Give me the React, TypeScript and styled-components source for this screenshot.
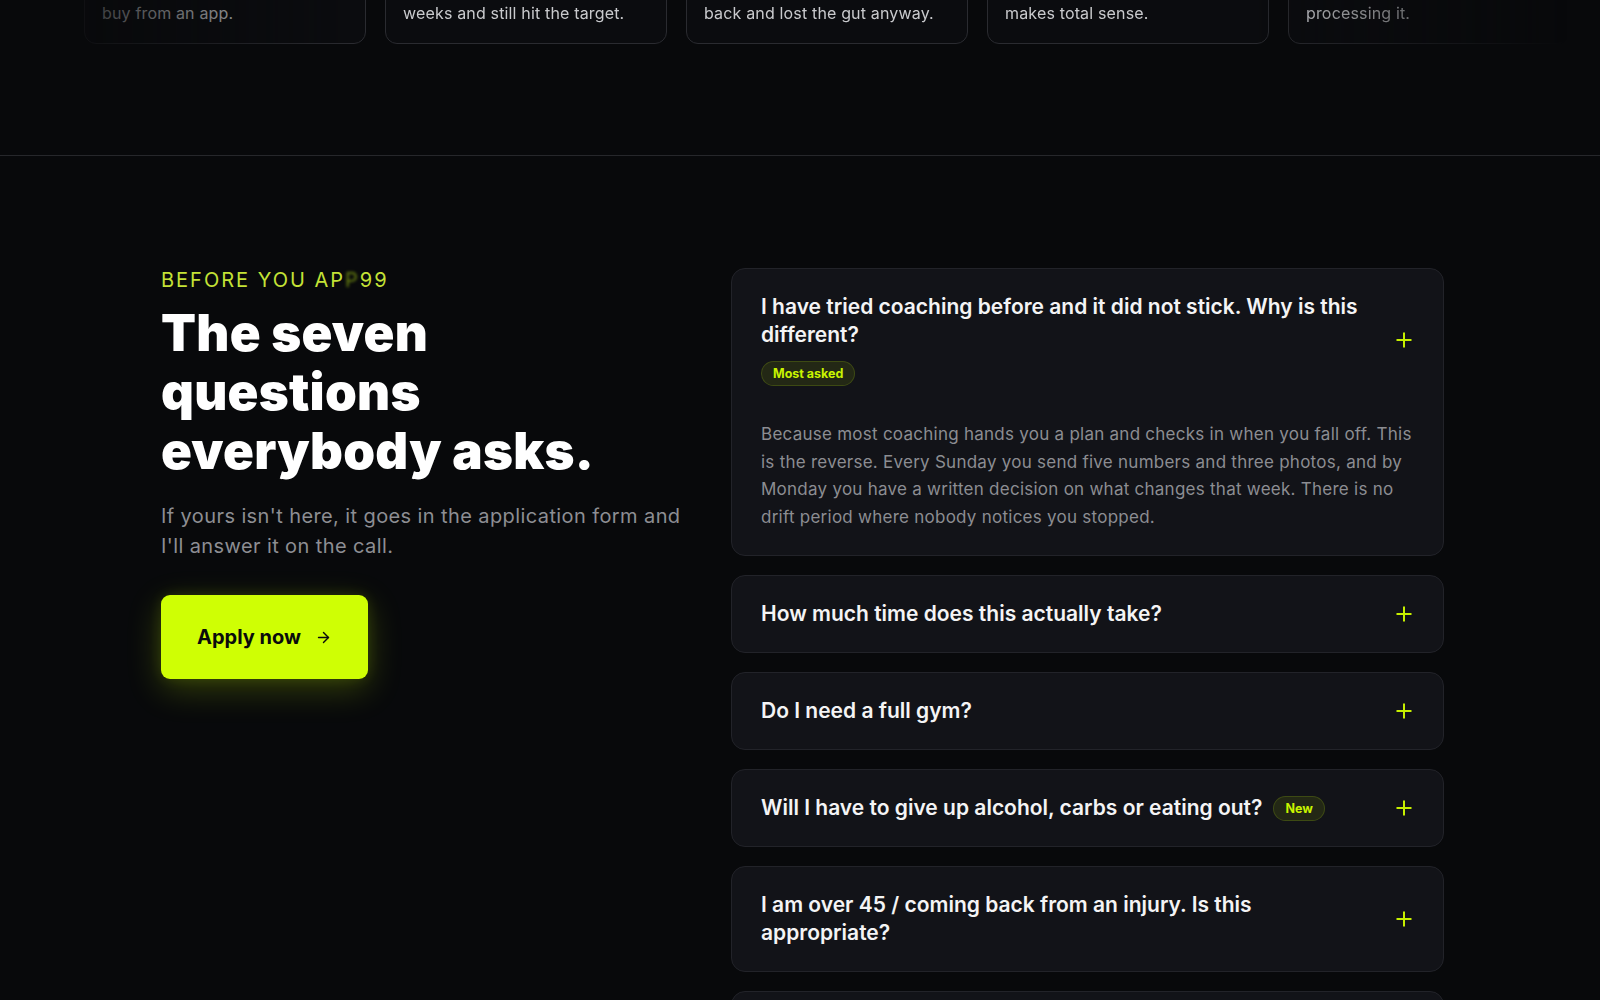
import React from 'react';
import styled, { createGlobalStyle } from 'styled-components';
import { ArrowRight } from 'lucide-react';

const lime = '#cfff04';

const GlobalStyle = createGlobalStyle`
  * { box-sizing: border-box; }
  html, body {
    margin: 0;
    background: #08090b;
    color: #f2f2f3;
    font-family: Inter, "Noto Sans", sans-serif;
    -webkit-font-smoothing: antialiased;
  }
`;

const Page = styled.div`
  min-height: 100vh;
  background: #08090b;
  overflow: hidden;
`;

const ProofBand = styled.section`
  padding-bottom: 111px;
  border-bottom: 1px solid #26272b;
`;

const ProofTrack = styled.div`
  height: 44px;
  display: flex;
  align-items: flex-end;
  gap: 19px;
  padding-left: 84px;
  overflow: hidden;
  mask-image: linear-gradient(90deg, transparent 0%, #000 22%, #000 78%, transparent 98%);
  -webkit-mask-image: linear-gradient(90deg, transparent 0%, #000 22%, #000 78%, transparent 98%);
`;

const ProofCard = styled.div`
  flex: 0 0 282px;
  width: 282px;
  min-width: 0;
  padding: 20px 17px 18px;
  border: 1px solid #2a2b30;
  border-radius: 12px;
  background: #0b0c0f;
  overflow: hidden;
`;

const ProofText = styled.div`
  font-size: 16px;
  line-height: 24px;
  letter-spacing: 0.01em;
  color: #c9cacd;
`;

const FaqSection = styled.section`
  padding: 112px 156px 0 161px;
`;

const Grid = styled.div`
  display: grid;
  grid-template-columns: 535px 713px;
  justify-content: space-between;
  align-items: start;
`;

const Intro = styled.div`
  display: flex;
  flex-direction: column;
  align-items: flex-start;
`;

const Eyebrow = styled.div`
  font-size: 20px;
  line-height: 24px;
  letter-spacing: 0.1em;
  color: #c4e236;
  text-transform: uppercase;
`;

const Glitch = styled.span`
  color: #7f9e12;
  filter: blur(1.6px);
  opacity: 0.8;
`;

const Heading = styled.h2`
  margin: 11px 0 0;
  max-width: 480px;
  font-size: 51px;
  line-height: 59px;
  font-weight: 900;
  letter-spacing: 0.005em;
  color: #ffffff;
`;

const Lead = styled.p`
  margin: 21px 0 0;
  max-width: 535px;
  font-size: 20px;
  line-height: 30px;
  letter-spacing: 0.02em;
  color: #8d8e93;
`;

const ApplyButton = styled.a`
  margin-top: 34px;
  height: 84px;
  padding: 0 36px;
  display: inline-flex;
  align-items: center;
  gap: 14px;
  border-radius: 9px;
  background: ${lime};
  color: #0a0b0c;
  font-size: 20px;
  font-weight: 700;
  text-decoration: none;
  box-shadow: 0 10px 34px rgba(207, 255, 4, 0.22), 0 0 14px rgba(207, 255, 4, 0.12);
`;

const FaqList = styled.div`
  display: flex;
  flex-direction: column;
  gap: 19px;
`;

const Card = styled.div`
  padding: 24px 27px 24px 29px;
  border: 1px solid #222329;
  border-radius: 14px;
  background: #121318;
`;

const Header = styled.div`
  display: flex;
  align-items: center;
  gap: 24px;
`;

const TitleBlock = styled.div`
  flex: 1;
  min-width: 0;
`;

const TitleRow = styled.div`
  display: flex;
  align-items: center;
  gap: 11px;
`;

const Question = styled.h3`
  margin: 0;
  font-size: 21px;
  line-height: 28px;
  font-weight: 600;
  color: #f4f4f5;
`;

const Tag = styled.span<{ $below?: boolean }>`
  display: inline-flex;
  align-items: center;
  height: 25px;
  padding: 0 11px;
  margin-top: ${({ $below }) => ($below ? '12px' : '0')};
  border-radius: 999px;
  border: 1px solid rgba(207, 255, 4, 0.16);
  background: rgba(207, 255, 4, 0.09);
  color: #c9f400;
  font-size: 12.5px;
  font-weight: 700;
  white-space: nowrap;
  flex-shrink: 0;
`;

const Toggle = styled.svg`
  flex: 0 0 24px;
  width: 24px;
  height: 24px;
  color: #c6ef00;
`;

const Answer = styled.p`
  margin: 35px 0 0;
  font-size: 17px;
  line-height: 27.5px;
  letter-spacing: 0.015em;
  color: #8c8d92;
`;

const proofs: { lead: string; last: string }[] = [
  { lead: 'Honest feedback every week, not another plan I could', last: 'buy from an app.' },
  { lead: 'Travelled for work for three of the twelve', last: 'weeks and still hit the target.' },
  { lead: 'Kept the weekend drinks, got my energy', last: 'back and lost the gut anyway.' },
  { lead: 'Every change comes with a reason, so it', last: 'makes total sense.' },
  { lead: 'The Monday notes are the best part, I am still', last: 'processing it.' },
];

type Faq = {
  q: string;
  tag?: string;
  tagBelow?: boolean;
  a?: string;
};

const faqs: Faq[] = [
  {
    q: 'I have tried coaching before and it did not stick. Why is this different?',
    tag: 'Most asked',
    tagBelow: true,
    a: 'Because most coaching hands you a plan and checks in when you fall off. This is the reverse. Every Sunday you send five numbers and three photos, and by Monday you have a written decision on what changes that week. There is no drift period where nobody notices you stopped.',
  },
  { q: 'How much time does this actually take?' },
  { q: 'Do I need a full gym?' },
  { q: 'Will I have to give up alcohol, carbs or eating out?', tag: 'New' },
  { q: 'I am over 45 / coming back from an injury. Is this appropriate?' },
  { q: 'What happens when the twelve weeks are over?' },
  { q: 'How do I know if I am a good fit?' },
];

const PlusIcon = () => (
  <Toggle viewBox="0 0 24 24" fill="none">
    <path d="M12 4.5v15M4.5 12h15" stroke="currentColor" strokeWidth="2" />
  </Toggle>
);

const FaqCard = ({ item }: { item: Faq }) => (
  <Card>
    <Header>
      <TitleBlock>
        {item.tag && !item.tagBelow ? (
          <TitleRow>
            <Question>{item.q}</Question>
            <Tag>{item.tag}</Tag>
          </TitleRow>
        ) : (
          <Question>{item.q}</Question>
        )}
        {item.tag && item.tagBelow && <Tag $below>{item.tag}</Tag>}
      </TitleBlock>
      <PlusIcon />
    </Header>
    {item.a && <Answer>{item.a}</Answer>}
  </Card>
);

export default function App() {
  return (
    <Page>
      <GlobalStyle />
      <ProofBand>
        <ProofTrack>
          {proofs.map((p) => (
            <ProofCard key={p.last}>
              <ProofText>{p.lead}</ProofText>
              <ProofText>{p.last}</ProofText>
            </ProofCard>
          ))}
        </ProofTrack>
      </ProofBand>

      <FaqSection>
        <Grid>
          <Intro>
            <Eyebrow>
              Before you ap<Glitch>p</Glitch>99
            </Eyebrow>
            <Heading>The seven questions everybody asks.</Heading>
            <Lead>If yours isn't here, it goes in the application form and I'll answer it on the call.</Lead>
            <ApplyButton href="#apply">
              Apply now
              <ArrowRight size={17} strokeWidth={2} />
            </ApplyButton>
          </Intro>

          <FaqList>
            {faqs.map((f) => (
              <FaqCard key={f.q} item={f} />
            ))}
          </FaqList>
        </Grid>
      </FaqSection>
    </Page>
  );
}
